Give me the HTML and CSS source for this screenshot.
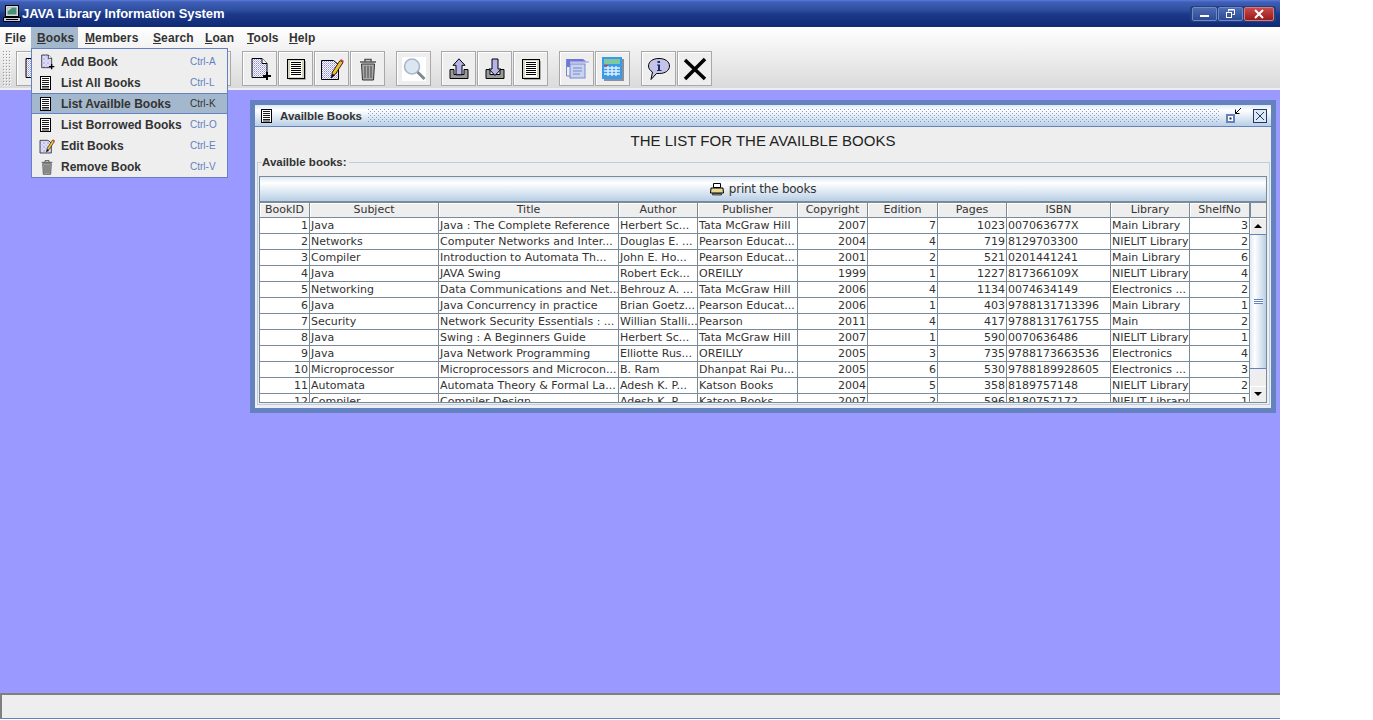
FILE: index.html
```html
<!DOCTYPE html>
<html lang="en">
<head>
    <meta charset="UTF-8">
    <title>JAVA Library Information System</title>
    <link rel="stylesheet" href="styles.css">
</head>
<body>
    <svg class="defs" width="0" height="0">
        <defs>
            <pattern id="dots" width="2" height="2" patternUnits="userSpaceOnUse">
                <rect width="2" height="2" fill="#fff"/>
                <rect width="1" height="1" fill="#8f8fe0"/>
                <rect x="1" y="1" width="1" height="1" fill="#b8b8f0"/>
            </pattern>
            <symbol id="i-new" viewBox="0 0 24 24">
                <path d="M4 1.500h10l5 5v14H4z" fill="url(#dots)" stroke="#000"/>
                <path d="M14 1.500v5h5" fill="#fff" stroke="#000"/>
                <path d="M19 15v8M15 19h8" stroke="#000" stroke-width="2" fill="none"/>
            </symbol>
            <symbol id="i-list" viewBox="0 0 16 16">
                <rect x="1.500" y="1.500" width="10" height="13" fill="#fff" stroke="#000"/>
                <path d="M3 3.500h7M3 5.500h7M3 7.500h7M3 9.500h7M3 11.500h7M3 13h7" stroke="#000" stroke-width=".9"/>
            </symbol>
            <symbol id="i-listbar" viewBox="0 0 24 24">
                <rect x="3.500" y="2.500" width="17" height="19" fill="#d6d6c0" stroke="#000" stroke-width="1"/>
                <rect x="6" y="4" width="12" height="16" fill="#fff"/>
                <path d="M7 5.500h10M7 7.500h10M7 9.500h10M7 11.500h10M7 13.500h10M7 15.500h10M7 17.500h10" stroke="#000"/>
                <path d="M21.500 4v18.500H5" stroke="#aaa" fill="none"/>
            </symbol>
            <symbol id="i-edit" viewBox="0 0 24 24">
                <path d="M1.500 3.500h12l5 4v15h-17z" fill="url(#dots)" stroke="#000"/>
                <path d="M11 21l1.500-6L20 3.500l3 2L15.500 17z" fill="#f0c030" stroke="#000" stroke-width=".8"/>
                <path d="M20 3.500l1-1.500 3 2-1 1.500z" fill="#d04040"/>
                <path d="M11 21l1.500-4 2.500 1z" fill="#000"/>
            </symbol>
            <symbol id="i-trash" viewBox="0 0 24 24">
                <path d="M4 5h16M9 4.500V2.500h6v2" fill="none" stroke="#555" stroke-width="1.500"/>
                <path d="M5.500 7h13l-1 16h-11z" fill="#aaa" stroke="#333"/>
                <path d="M9 9v12M12 9v12M15 9v12" stroke="#444" stroke-width="1"/>
            </symbol>
            <symbol id="i-search" viewBox="0 0 24 24">
                <rect width="24" height="24" fill="#fff"/>
                <circle cx="10" cy="9.500" r="7.500" fill="#dbe6f2" stroke="#a8b6c8" stroke-width="1.600"/>
                <path d="M15.500 15l7 7" stroke="#808890" stroke-width="3"/>
            </symbol>
            <symbol id="i-up" viewBox="0 0 24 24">
                <path d="M3 12.500h4v5h10v-5h4v9H3z" fill="#999" stroke="#000"/>
                <path d="M12 1.800l6 6.500h-3v9.500H9V8.300H6z" fill="#b4b4ea" stroke="#000"/>
            </symbol>
            <symbol id="i-down" viewBox="0 0 24 24">
                <path d="M3 12.500h4v5h10v-5h4v9H3z" fill="#999" stroke="#000"/>
                <path d="M12 18.500L6 12h3V2h6v10h3z" fill="#b4b4ea" stroke="#000"/>
            </symbol>
            <symbol id="i-sheets" viewBox="0 0 24 24">
                <path d="M1 2h17l4 3H5l1 5H2z" fill="#6a78d8"/>
                <rect x="5" y="7" width="15" height="14" fill="#c8d4ee" stroke="#7888d0"/>
                <path d="M1.500 4v15h4M8 11h9M8 14h9M8 17h7" stroke="#7888c8" fill="none"/>
                <path d="M5 5h19" stroke="#b0b0ec" stroke-width="1.500"/>
            </symbol>
            <symbol id="i-calc" viewBox="0 0 24 24">
                <rect x="3" y="2" width="20" height="22" fill="#8a9098"/>
                <rect x="1" y="0" width="20" height="22" fill="#3a9ae8"/>
                <rect x="3" y="2" width="16" height="5" fill="#7ec8a0"/>
                <rect x="3" y="8" width="4" height="1.500" fill="#d04040"/>
                <path d="M3 11h16M3 14h16M3 17h16M7 9v10M11 9v10M15 9v10" stroke="#dff0ff" stroke-width="1.400"/>
            </symbol>
            <symbol id="i-info" viewBox="0 0 24 24">
                <path d="M12 1.500c6 0 10.500 3 10.500 7.500s-4.500 7.500-10 7.500c-1 0-2 0-3 0L4 22.500l1.500-7.500C3 13.500 1.500 11.500 1.500 9 1.500 4.500 6 1.500 12 1.500z" fill="#c4c4e8" stroke="#000"/>
                <path d="M10.500 6h2.500v-2h-2.500zM10 7.500h3v5.500h1.500v1h-4.500v-1h1v-4.500h-1z" fill="#1e2a70"/>
            </symbol>
            <symbol id="i-x" viewBox="0 0 24 24">
                <path d="M2 3l20 19M22 2L2 22" stroke="#000" stroke-width="3.500" fill="none"/>
            </symbol>
            <symbol id="i-printer" viewBox="0 0 14 14">
                <path d="M3.500 1.500h7v4h-7z" fill="#fff" stroke="#000"/>
                <path d="M1 6h12l.5 5h-13z" fill="#e8d890" stroke="#000"/>
                <path d="M2.500 11.500h9v1.500h-9z" fill="#999" stroke="#000" stroke-width=".6"/>
            </symbol>
            <symbol id="i-computer" viewBox="0 0 18 18">
                <rect x="2.500" y="0.500" width="13" height="11" fill="#d8d8d8" stroke="#000"/>
                <rect x="4.500" y="2.500" width="9" height="7" fill="#4a9078"/>
                <path d="M4.500 2.500h5l-5 4z" fill="#b8d8d0"/>
                <path d="M0.500 12.500h17v4h-17z" fill="#c8c8e8" stroke="#000"/>
                <path d="M3 14.500h12" stroke="#000"/>
            </symbol>
        </defs>
    </svg>

    <div class="app">
        <!-- window title bar -->
        <header class="titlebar">
            <svg class="title-icon"><use href="#i-computer"/></svg>
            <span class="title-text">JAVA Library Information System</span>
            <div class="win-buttons">
                <button class="win-btn"><span class="glyph-min"></span></button>
                <button class="win-btn">
                    <svg width="11" height="10" viewBox="0 0 11 10"><path d="M3.500 2.500V.5h6v5H7.500" fill="none" stroke="#fff"/><path d="M3 1h6" stroke="#fff"/><rect x="1.500" y="3.500" width="5" height="5" fill="none" stroke="#fff"/></svg>
                </button>
                <button class="win-btn win-close">
                    <svg width="10" height="10" viewBox="0 0 10 10"><path d="M1 1l8 8M9 1L1 9" stroke="#fff" stroke-width="2"/></svg>
                </button>
            </div>
        </header>

        <div class="top">
            <nav class="menubar">
                <a class="menu-item"><u>F</u>ile</a>
                <a class="menu-item active"><u>B</u>ooks</a>
                <a class="menu-item"><u>M</u>embers</a>
                <a class="menu-item"><u>S</u>earch</a>
                <a class="menu-item"><u>L</u>oan</a>
                <a class="menu-item"><u>T</u>ools</a>
                <a class="menu-item"><u>H</u>elp</a>
            </nav>
            <div class="toolbar">
                <span class="grip"></span>
                <div class="tool-group">
                    <button class="tool"><svg><use href="#i-new"/></svg></button>
                    <button class="tool"><svg><use href="#i-listbar"/></svg></button>
                    <button class="tool"><svg><use href="#i-edit"/></svg></button>
                    <button class="tool"><svg><use href="#i-trash"/></svg></button>
                    <button class="tool"><svg><use href="#i-new"/></svg></button>
                    <button class="tool"><svg><use href="#i-listbar"/></svg></button>
                </div>
                <div class="tool-group">
                    <button class="tool"><svg><use href="#i-new"/></svg></button>
                    <button class="tool"><svg><use href="#i-listbar"/></svg></button>
                    <button class="tool"><svg><use href="#i-edit"/></svg></button>
                    <button class="tool"><svg><use href="#i-trash"/></svg></button>
                </div>
                <div class="tool-group tight">
                    <button class="tool"><svg><use href="#i-search"/></svg></button>
                </div>
                <div class="tool-group">
                    <button class="tool"><svg><use href="#i-up"/></svg></button>
                    <button class="tool"><svg><use href="#i-down"/></svg></button>
                    <button class="tool"><svg><use href="#i-listbar"/></svg></button>
                </div>
                <div class="tool-group">
                    <button class="tool"><svg><use href="#i-sheets"/></svg></button>
                    <button class="tool"><svg><use href="#i-calc"/></svg></button>
                </div>
                <div class="tool-group">
                    <button class="tool"><svg><use href="#i-info"/></svg></button>
                    <button class="tool"><svg><use href="#i-x"/></svg></button>
                </div>
            </div>
        </div>

        <main class="desktop">
            <section class="frame">
                <div class="frame-title">
                    <svg class="frame-icon"><use href="#i-list"/></svg>
                    <span class="frame-name">Availble Books</span>
                    <span class="frame-dots"></span>
                    <span class="frame-iconify">
                        <svg width="18" height="17" viewBox="0 0 18 17">
                            <rect x="1" y="8" width="7" height="7" fill="#fff" stroke="#6382bf" stroke-width="2"/>
                            <rect x="3.500" y="10.500" width="2" height="2" fill="#223"/>
                            <path d="M15 1L9.500 6.500M9.500 2.500v4h4" stroke="#000" fill="none"/>
                        </svg>
                    </span>
                    <span class="frame-close">
                        <svg width="14" height="14" viewBox="0 0 14 14">
                            <rect x=".5" y=".5" width="13" height="13" fill="#dde8f3" stroke="#1f3a66"/>
                            <path d="M3 3l8 8M11 3l-8 8" stroke="#1f3a66"/>
                        </svg>
                    </span>
                </div>
                <div class="frame-body">
                    <h1 class="list-heading">THE LIST FOR THE AVAILBLE BOOKS</h1>
                    <fieldset class="group">
                        <legend>Availble books:</legend>
                        <button class="print-btn"><svg width="14" height="14"><use href="#i-printer"/></svg>print the books</button>
                        <div class="table-pane">
                            <div class="table-view">
                                <table class="books">
                                    <colgroup>
                                        <col style="width:50px"><col style="width:129px"><col style="width:180px"><col style="width:79px"><col style="width:100px"><col style="width:70px"><col style="width:70px"><col style="width:69px"><col style="width:104px"><col style="width:79px"><col style="width:60px">
                                    </colgroup>
                                    <thead>
                                        <tr><th>BookID</th><th>Subject</th><th>Title</th><th>Author</th><th>Publisher</th><th>Copyright</th><th>Edition</th><th>Pages</th><th>ISBN</th><th>Library</th><th>ShelfNo</th></tr>
                                    </thead>
                                    <tbody>
                                        <tr><td class="num">1</td><td>Java</td><td>Java : The Complete Reference</td><td>Herbert Sc...</td><td>Tata McGraw Hill</td><td class="num">2007</td><td class="num">7</td><td class="num">1023</td><td>007063677X</td><td>Main Library</td><td class="num">3</td></tr>
                                        <tr><td class="num">2</td><td>Networks</td><td>Computer Networks and Inter...</td><td>Douglas E. ...</td><td>Pearson Educat...</td><td class="num">2004</td><td class="num">4</td><td class="num">719</td><td>8129703300</td><td>NIELIT Library</td><td class="num">2</td></tr>
                                        <tr><td class="num">3</td><td>Compiler</td><td>Introduction to Automata Th...</td><td>John E. Ho...</td><td>Pearson Educat...</td><td class="num">2001</td><td class="num">2</td><td class="num">521</td><td>0201441241</td><td>Main Library</td><td class="num">6</td></tr>
                                        <tr><td class="num">4</td><td>Java</td><td>JAVA Swing</td><td>Robert Eck...</td><td>OREILLY</td><td class="num">1999</td><td class="num">1</td><td class="num">1227</td><td>817366109X</td><td>NIELIT Library</td><td class="num">4</td></tr>
                                        <tr><td class="num">5</td><td>Networking</td><td>Data Communications and Net...</td><td>Behrouz A. ...</td><td>Tata McGraw Hill</td><td class="num">2006</td><td class="num">4</td><td class="num">1134</td><td>0074634149</td><td>Electronics ...</td><td class="num">2</td></tr>
                                        <tr><td class="num">6</td><td>Java</td><td>Java Concurrency in practice</td><td>Brian Goetz...</td><td>Pearson Educat...</td><td class="num">2006</td><td class="num">1</td><td class="num">403</td><td>9788131713396</td><td>Main Library</td><td class="num">1</td></tr>
                                        <tr><td class="num">7</td><td>Security</td><td>Network Security Essentials : ...</td><td>Willian Stalli...</td><td>Pearson</td><td class="num">2011</td><td class="num">4</td><td class="num">417</td><td>9788131761755</td><td>Main</td><td class="num">2</td></tr>
                                        <tr><td class="num">8</td><td>Java</td><td>Swing : A Beginners Guide</td><td>Herbert Sc...</td><td>Tata McGraw Hill</td><td class="num">2007</td><td class="num">1</td><td class="num">590</td><td>0070636486</td><td>NIELIT Library</td><td class="num">1</td></tr>
                                        <tr><td class="num">9</td><td>Java</td><td>Java Network Programming</td><td>Elliotte Rus...</td><td>OREILLY</td><td class="num">2005</td><td class="num">3</td><td class="num">735</td><td>9788173663536</td><td>Electronics</td><td class="num">4</td></tr>
                                        <tr><td class="num">10</td><td>Microprocessor</td><td>Microprocessors and Microcon...</td><td>B. Ram</td><td>Dhanpat Rai Pu...</td><td class="num">2005</td><td class="num">6</td><td class="num">530</td><td>9788189928605</td><td>Electronics ...</td><td class="num">3</td></tr>
                                        <tr><td class="num">11</td><td>Automata</td><td>Automata Theory &amp; Formal La...</td><td>Adesh K. P...</td><td>Katson Books</td><td class="num">2004</td><td class="num">5</td><td class="num">358</td><td>8189757148</td><td>NIELIT Library</td><td class="num">2</td></tr>
                                        <tr><td class="num">12</td><td>Compiler</td><td>Compiler Design</td><td>Adesh K. P...</td><td>Katson Books</td><td class="num">2007</td><td class="num">2</td><td class="num">596</td><td>8180757172</td><td>NIELIT Library</td><td class="num">1</td></tr>
                                    </tbody>
                                </table>
                            </div>
                            <div class="scrollbar">
                                <div class="scroll-corner"></div>
                                <div class="scroll-arrow"><span class="tri-up"></span></div>
                                <div class="scroll-track">
                                    <div class="scroll-thumb"><span class="thumb-grip"></span></div>
                                </div>
                                <div class="scroll-arrow"><span class="tri-down"></span></div>
                            </div>
                        </div>
                    </fieldset>
                </div>
            </section>

            <!-- open Books menu -->
            <ul class="popup">
                <li class="popup-row"><svg><use href="#i-new"/></svg><span class="popup-label">Add Book</span><span class="accel">Ctrl-A</span></li>
                <li class="popup-row"><svg><use href="#i-list"/></svg><span class="popup-label">List All Books</span><span class="accel">Ctrl-L</span></li>
                <li class="popup-row selected"><svg><use href="#i-list"/></svg><span class="popup-label">List Availble Books</span><span class="accel">Ctrl-K</span></li>
                <li class="popup-row"><svg><use href="#i-list"/></svg><span class="popup-label">List Borrowed Books</span><span class="accel">Ctrl-O</span></li>
                <li class="popup-row"><svg><use href="#i-edit"/></svg><span class="popup-label">Edit Books</span><span class="accel">Ctrl-E</span></li>
                <li class="popup-row"><svg><use href="#i-trash"/></svg><span class="popup-label">Remove Book</span><span class="accel">Ctrl-V</span></li>
            </ul>
        </main>

        <footer class="statusbar"></footer>
    </div>
</body>
</html>
```

FILE: styles.css
```css
html, body {
    margin: 0;
    height: 100%;
    background-color: white;
    overflow: hidden;
}

body {
    font-family: "Liberation Sans", Arial, sans-serif;
    color: #333;
}

.defs {
    position: absolute;
}

.app {
    width: 1280px;
    height: 718px;
    display: flex;
    flex-direction: column;
    border-bottom: 1px solid #6382bf;
}

/* title bar */
.titlebar {
    height: 27px;
    flex: none;
    display: flex;
    align-items: center;
    padding: 0 4px 0 3px;
    box-sizing: border-box;
    background: linear-gradient(#5a7ad8 0, #3f5fb8 2px, #2e4e9e 10px, #1c3a8a 14px, #102a74 100%);
}

.title-icon {
    width: 18px;
    height: 18px;
    flex: none;
    margin-right: 1px;
}

.title-text {
    font-weight: bold;
    font-size: 13px;
    color: white;
    flex: 1;
    letter-spacing: -0.08px;
}

.win-buttons {
    display: flex;
    gap: 1px;
    padding: 1px 2px;
    border-radius: 3px;
    background-color: #24407e;
}

.win-btn {
    width: 25px;
    height: 14px;
    padding: 0;
    box-sizing: border-box;
    border: 1px solid #6f8acb;
    border-radius: 2px;
    background: linear-gradient(#4f6cb4, #2c4a94);
    display: flex;
    align-items: center;
    justify-content: center;
}

.win-close {
    width: 30px;
    border-color: #d87a7a;
    background: linear-gradient(#c84a4a, #9a1a1a);
}

.glyph-min {
    width: 9px;
    height: 2px;
    margin-top: 5px;
    background-color: white;
}

/* menu and tool bars */
.top {
    flex: none;
    background: linear-gradient(#ffffff, #dadada);
    border-bottom: 2px solid #eeeeee;
}

.menubar {
    height: 21px;
    display: grid;
    grid-template-columns: 31px 48px 68px 52px 42px 42px 1fr;
    font-size: 12px;
    font-weight: bold;
    letter-spacing: 0.1px;
}

.menu-item {
    height: 21px;
    padding-left: 6px;
    line-height: 22px;
    color: #333;
}

.menu-item:first-child {
    padding-left: 5px;
}

.menu-item.active {
    margin-right: 1px;
    background-color: #a3b8cc;
}

.toolbar {
    height: 40px;
    display: flex;
    align-items: flex-start;
    gap: 11px;
    padding-top: 3px;
    box-sizing: border-box;
}

.grip {
    width: 9px;
    height: 35px;
    margin: 0 -7px 0 3px;
    background-image: conic-gradient(at 1px 1px, transparent 75%, #999 0), conic-gradient(at 1px 1px, transparent 75%, #fff 0);
    background-size: 3px 3px;
    background-position: 0 0, 1px 1px;
}

.tool-group {
    display: flex;
    gap: 1px;
}

.tool-group.tight {
    margin-right: -1px;
}

.tool {
    width: 35px;
    height: 35px;
    padding: 0;
    box-sizing: border-box;
    background-color: #eeeeee;
    border: 1px solid #a8a8a8;
    box-shadow: inset 1px 1px 0 #fff;
    display: flex;
    align-items: center;
    justify-content: center;
}

.tool svg {
    width: 24px;
    height: 24px;
}

/* desktop */
.desktop {
    flex: 1;
    position: relative;
    background-color: #9999ff;
}

.frame {
    position: absolute;
    left: 250px;
    top: 10px;
    width: 1026px;
    height: 313px;
    box-sizing: border-box;
    border: 5px solid #6382bf;
    background-color: #eeeeee;
    display: flex;
    flex-direction: column;
}

.frame-title {
    height: 22px;
    flex: none;
    box-sizing: border-box;
    display: flex;
    align-items: center;
    padding-left: 5px;
    border-bottom: 1px solid #6382bf;
    background: linear-gradient(#dde8f3 0, #ffffff 25%, #b8cfe5 100%);
}

.frame-icon {
    width: 16px;
    height: 16px;
    flex: none;
}

.frame-name {
    font-size: 11.5px;
    font-weight: bold;
    color: #333;
    margin: 0 6px 0 4px;
}

.frame-dots {
    flex: 1;
    height: 14px;
    background-image: conic-gradient(at 1px 1px, transparent 75%, #7f9bd0 0), conic-gradient(at 1px 1px, transparent 75%, #7f9bd0 0);
    background-size: 4px 4px;
    background-position: 0 0, 2px 2px;
}

.frame-iconify {
    display: flex;
    margin: 0 9px 0 6px;
}

.frame-close {
    display: flex;
    margin-right: 4px;
}

.frame-body {
    flex: 1;
    display: flex;
    flex-direction: column;
    min-height: 0;
}

.list-heading {
    margin: 5px 0 0;
    height: 17px;
    line-height: 17px;
    text-align: center;
    font-size: 15px;
    font-weight: normal;
    color: #222;
}

.group {
    flex: 1;
    min-height: 0;
    margin: 6px 1px 3px 2px;
    padding: 0 2px 0 1px;
    border: 1px solid #b8cfe5;
    display: flex;
    flex-direction: column;
}

.group legend {
    padding: 0 2px 0 0;
    margin-left: 3px;
    font-size: 11.5px;
    font-weight: bold;
    color: #333;
    line-height: 14px;
}

.print-btn {
    flex: none;
    height: 26px;
    width: 1008px;
    margin-top: 7px;
    padding: 0;
    border: 1px solid #7a8a99;
    background: linear-gradient(#dde8f3 0, #ffffff 25%, #b8cfe5 100%);
    font-family: "DejaVu Sans", sans-serif;
    font-size: 12px;
    letter-spacing: -0.25px;
    color: #333;
    display: flex;
    align-items: center;
    justify-content: center;
    gap: 5px;
}

.table-pane {
    width: 1008px;
    height: 201px;
    flex: none;
    box-sizing: border-box;
    border: 1px solid #7a8a99;
    display: flex;
    background-color: #eee;
}

.table-view {
    width: 990px;
    flex: none;
    overflow: hidden;
    background-color: white;
}

.books {
    width: 990px;
    table-layout: fixed;
    border-collapse: separate;
    border-spacing: 0;
    font-family: "DejaVu Sans", sans-serif;
    font-size: 11px;
    color: #333;
}

.books th {
    height: 14px;
    padding: 0;
    font-weight: normal;
    background-color: #eeeeee;
    border-right: 1px solid #7a8a99;
    border-bottom: 1px solid #7a8a99;
    box-shadow: inset 1px 1px 0 #fff;
    line-height: 14px;
    overflow: hidden;
    white-space: nowrap;
}

.books td {
    height: 15px;
    padding: 0 1px;
    border-right: 1px solid #7a8a99;
    border-bottom: 1px solid #7a8a99;
    line-height: 15px;
    overflow: hidden;
    white-space: nowrap;
}

.books .num {
    text-align: right;
}

.scrollbar {
    width: 16px;
    flex: none;
    display: flex;
    flex-direction: column;
}

.scroll-corner {
    height: 15px;
    flex: none;
    border-bottom: 1px solid #7a8a99;
    border-left: 1px solid #7a8a99;
    box-sizing: border-box;
}

.scroll-arrow {
    height: 16px;
    flex: none;
    box-sizing: border-box;
    background-color: #eee;
    box-shadow: inset 1px 1px 0 #fff;
    display: flex;
    align-items: center;
    justify-content: center;
}

.tri-up {
    border: 4px solid transparent;
    border-top: 0;
    border-bottom: 4px solid #000;
}

.tri-down {
    border: 4px solid transparent;
    border-bottom: 0;
    border-top: 4px solid #000;
}

.scroll-track {
    flex: 1;
    background-color: #eee;
}

.scroll-thumb {
    height: 135px;
    box-sizing: border-box;
    border-top: 1px solid #6382bf;
    border-bottom: 1px solid #6382bf;
    background: linear-gradient(to right, #dde8f3 0, #ffffff 30%, #b8cfe5 100%);
    display: flex;
    align-items: center;
    justify-content: center;
}

.thumb-grip {
    width: 9px;
    height: 5px;
    border-top: 1px solid #6382bf;
    border-bottom: 1px solid #6382bf;
    background: linear-gradient(#fff 1px, #6382bf 1px 2px, #fff 2px);
    box-sizing: border-box;
}

/* popup menu over the desktop */
.popup {
    position: absolute;
    left: 31px;
    top: -42px;
    width: 197px;
    height: 130px;
    margin: 0;
    padding: 2px 0 0;
    box-sizing: border-box;
    list-style: none;
    background-color: #eeeeee;
    border: 1px solid #6382bf;
}

.popup-row {
    height: 21px;
    box-sizing: border-box;
    display: flex;
    align-items: center;
    padding-left: 7px;
    font-size: 12px;
    font-weight: bold;
    color: #333;
}

.popup-row svg {
    width: 16px;
    height: 16px;
    flex: none;
}

.popup-label {
    margin-left: 6px;
    flex: 1;
}

.accel {
    width: 37px;
    font-size: 10px;
    font-weight: normal;
    color: #6382bf;
}

.popup-row.selected {
    background-color: #a3b8cc;
    border-top: 1px solid #6382bf;
    border-bottom: 1px solid #6382bf;
}

.popup-row.selected .accel {
    color: #333;
}

/* status bar */
.statusbar {
    height: 25px;
    flex: none;
    box-sizing: border-box;
    background-color: #eeeeee;
    border-top: 2px solid #808080;
    border-left: 2px solid #808080;
}
```
